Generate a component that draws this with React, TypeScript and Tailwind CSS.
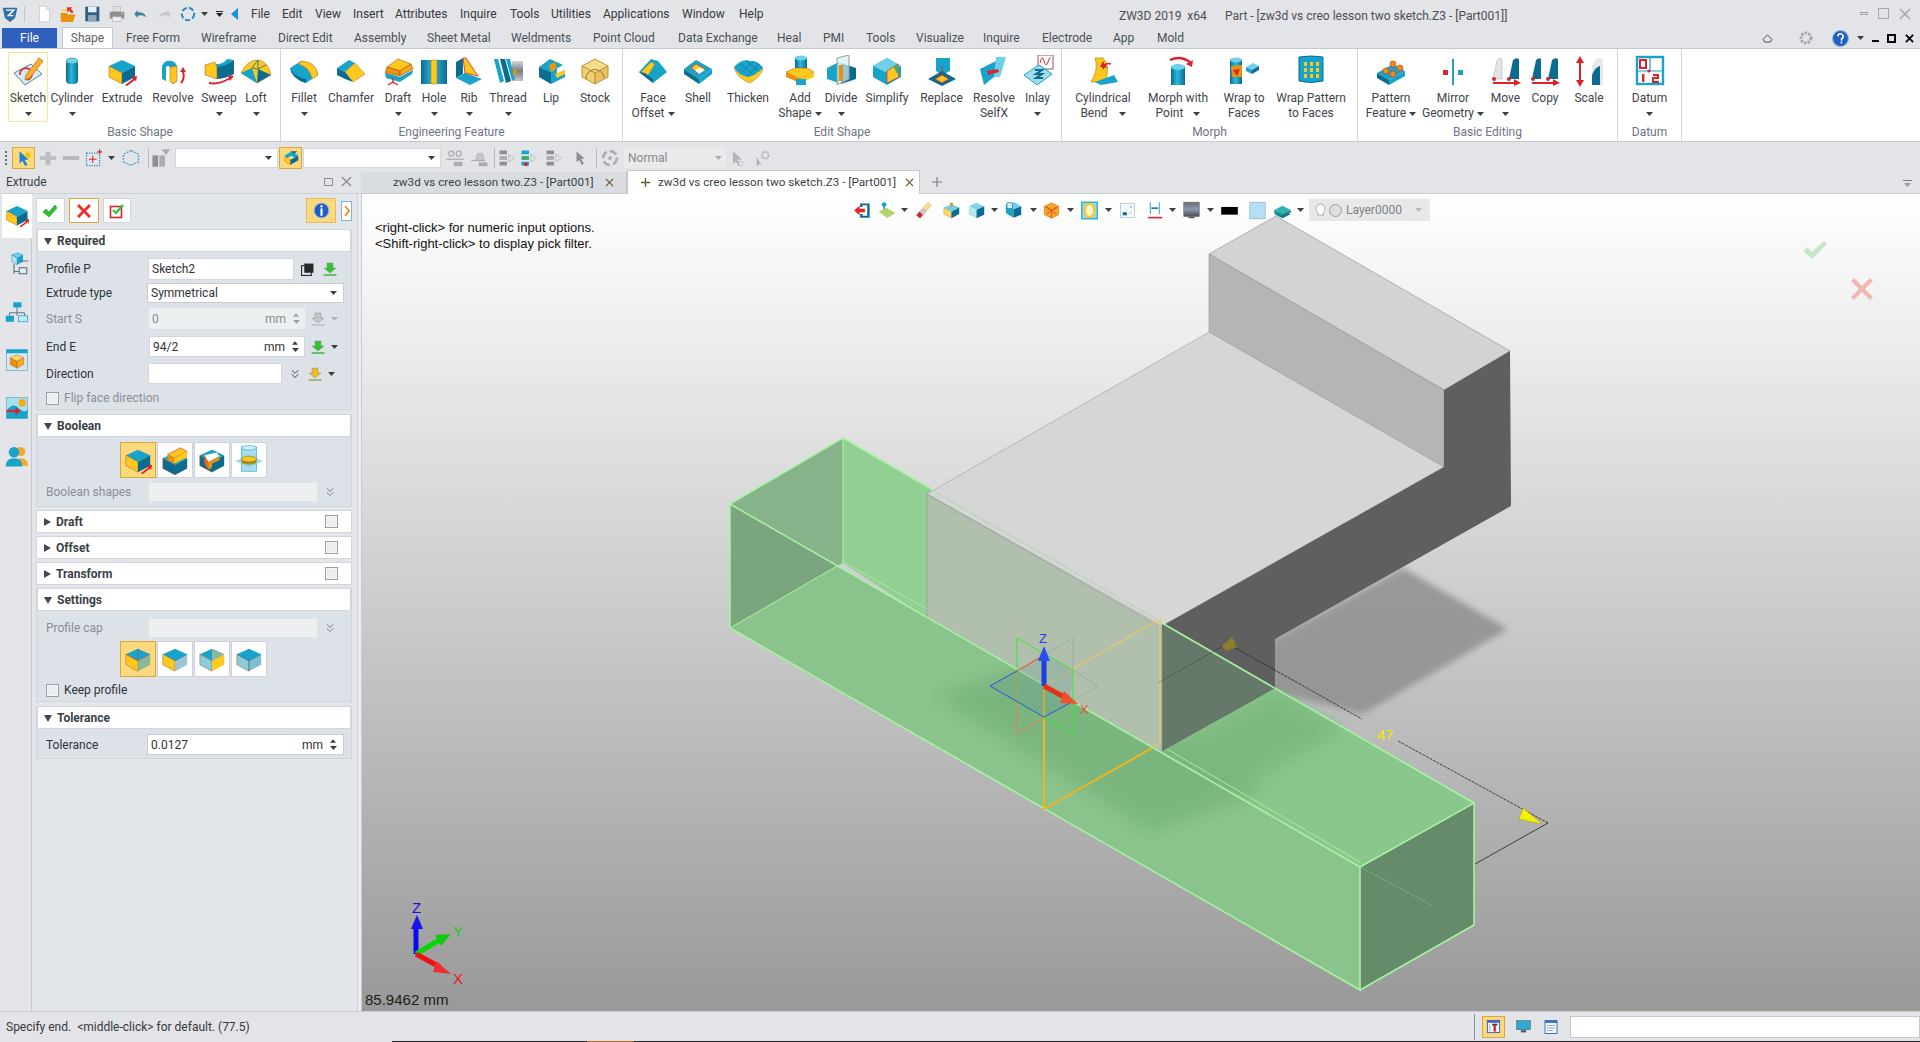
import type { ReactNode } from 'react';
import { ChevronsDown } from 'lucide-react';

const B = '#18a3cb';
const BD = '#0b6c90';
const BL = '#6fd0ea';
const Y = '#ffc81e';
const YD = '#e8920c';
const R = '#d8252b';
const G = '#a9adb1';
const GD = '#8c9094';

function Box({ top = B, left = Y, right = BD, t }: { top?: string; left?: string; right?: string; t?: string }) {
  return (
    <g transform={t}>
      <polygon points="16,5 29,11 16,18 3,11" fill={top} />
      <polygon points="3,11 16,18 16,29 3,22" fill={left} stroke="#a8501a" strokeWidth="0.5" />
      <polygon points="16,18 29,11 29,22 16,29" fill={right} />
    </g>
  );
}

const icons: Record<string, ReactNode> = {
  sketch: (
    <>
      <polygon points="2,17 19,8 30,18 13,29" fill="#d6e8f0" stroke="#4f8ca6" />
      <path d="M8 19a6 6 0 1 1 7 5" fill="none" stroke={R} strokeWidth="1.6" />
      <polygon points="14,19 27,2 31,5 18,22 13,24" fill="#ffb02a" stroke="#a8661a" strokeWidth="0.7" />
    </>
  ),
  cylinder: (
    <>
      <rect x="10" y="5" width="12" height="24" rx="4" fill="url(#cyl)" />
      <ellipse cx="16" cy="6" rx="6" ry="3" fill={BL} stroke={BD} strokeWidth="0.5" />
    </>
  ),
  extrude: (
    <>
      <Box />
      <path d="M19 30l8-6-2-2 6-1-1 6-1-2-8 6z" fill={R} />
    </>
  ),
  revolve: (
    <>
      <path d="M5 24V11a8 8 0 0 1 15 0v15l-4 3-3-3V13a2 2 0 0 0-4 0v13z" fill={B} />
      <polygon points="13,12 20,11 20,26 16,29 13,26" fill={Y} stroke="#a8501a" strokeWidth="0.5" />
      <path d="M24 28c3-3 3-8 2-12" fill="none" stroke={R} strokeWidth="2" />
      <polygon points="23,17 26,12 29,17" fill={R} />
    </>
  ),
  sweep: (
    <>
      <path d="M13 10Q20 12 31 5V19Q22 24 13 24z" fill={BD} />
      <path d="M12 9Q20 10 24 4L31 5Q22 12 14 12z" fill={B} />
      <polygon points="2,10 12,7 14,12 14,24 2,20" fill={Y} stroke="#a8501a" strokeWidth="0.5" />
      <path d="M6 28Q16 30 27 23" fill="none" stroke={R} strokeWidth="2" />
      <polygon points="25,20 31,21 27,26" fill={R} />
    </>
  ),
  loft: (
    <>
      <path d="M1 18Q7 5 18 5Q28 6 31 20L17 28z" fill={Y} stroke="#a8701a" strokeWidth="0.5" />
      <polygon points="1,18 12,13 17,28" fill={B} />
      <polygon points="18,14 31,20 17,28" fill={BD} />
      <path d="M12 13L18 5M18 14L12 13M18 14L18 5M18 14L26 10" stroke={BD} strokeWidth="0.8" fill="none" />
    </>
  ),
  fillet: (
    <>
      <path d="M2 13L13 6Q28 7 30 20L18 28Q4 24 2 13z" fill={B} />
      <path d="M10 9L14 6Q28 7 30 20L24 24Q22 12 10 9z" fill={Y} stroke="#a8701a" strokeWidth="0.5" />
      <path d="M2 13Q4 24 18 28V24Q6 22 2 13z" fill={BD} />
    </>
  ),
  chamfer: (
    <>
      <polygon points="2,13 14,5 20,8 10,17" fill={B} />
      <polygon points="10,17 20,8 30,19 18,27" fill={Y} stroke="#a8701a" strokeWidth="0.5" />
      <polygon points="2,13 10,17 18,27 10,24 2,20" fill={BD} />
    </>
  ),
  draft: (
    <>
      <polygon points="5,12 16,4 29,9 18,16" fill={Y} stroke="#a8501a" strokeWidth="0.6" />
      <polygon points="3,18 18,21 18,16 5,12" fill={YD} stroke="#a8501a" strokeWidth="0.6" />
      <polygon points="18,21 31,14 29,9 18,16" fill="#f4a81c" stroke="#a8501a" strokeWidth="0.6" />
      <polygon points="3,18 18,22 31,15 30,19 18,27 4,23" fill={B} />
      <path d="M11 23v5M11 27l-5 3M11 27l5 3" stroke={R} strokeWidth="1.4" fill="none" />
    </>
  ),
  hole: (
    <>
      <rect x="3" y="5" width="26" height="24" fill="url(#cyl)" />
      <rect x="13" y="5" width="6" height="24" fill={Y} stroke="#a8701a" strokeWidth="0.5" />
    </>
  ),
  rib: (
    <>
      <polygon points="3,7 10,3 10,19 3,23" fill={BD} />
      <polygon points="3,23 12,18 29,24 17,30" fill={B} />
      <polygon points="10,3 13,3 25,21 12,18" fill={Y} stroke={R} strokeWidth="0.8" />
    </>
  ),
  thread: (
    <>
      <rect x="20" y="6" width="11" height="20" fill="url(#steel)" />
      <polygon points="2,4 6,4 12,26 8,28" fill={B} />
      <polygon points="8,4 13,4 19,26 14,28" fill={BD} />
      <polygon points="14,4 18,4 23,24 20,26" fill={B} />
      <polygon points="21,13 26,17 21,21" fill={YD} />
    </>
  ),
  lip: (
    <>
      <polygon points="4,12 15,4 28,10 16,17" fill={B} />
      <polygon points="4,12 16,17 16,29 4,22" fill={BD} />
      <polygon points="16,17 22,13 22,19 30,15 30,22 16,29" fill={B} />
      <polygon points="14,10 20,7 22,13 16,17" fill="#e8960e" />
      <polygon points="20,19 30,15 30,19 22,23" fill={Y} />
    </>
  ),
  stock: (
    <>
      <polygon points="16,4 29,11 16,18 3,11" fill="#f7dc88" stroke="#b8943a" />
      <polygon points="3,11 16,18 16,29 3,22" fill="#f2cf70" stroke="#b8943a" />
      <polygon points="16,18 29,11 29,22 16,29" fill="#eac060" stroke="#b8943a" />
      <path d="M7 24a9 9 0 0 1 18-1" fill="none" stroke="#8e7a3a" />
    </>
  ),
  faceoffset: (
    <>
      <polygon points="2,17 14,4 21,6 30,17 16,28" fill={B} />
      <polygon points="4,17 14,7 18,9 10,22" fill={Y} stroke="#7f8a40" strokeWidth="0.5" />
      <polygon points="2,17 16,28 16,24 8,18" fill={BD} />
    </>
  ),
  shell: (
    <>
      <polygon points="2,14 14,5 30,14 17,24" fill={B} />
      <polygon points="9,13 14,9 23,14 17,19" fill={Y} stroke={R} strokeWidth="0.6" />
      <polygon points="13,15 17,13 23,15 17,19" fill="#fff" />
      <polygon points="2,14 17,24 17,29 2,19" fill={BD} />
      <polygon points="17,24 30,14 30,19 17,29" fill={B} />
    </>
  ),
  thicken: (
    <>
      <path d="M2 13Q10 4 18 7Q26 6 31 14Q28 22 18 28Q6 24 2 13z" fill={Y} stroke="#a8701a" strokeWidth="0.5" />
      <path d="M2 12Q10 3 18 6Q26 5 31 13Q24 20 16 22Q6 20 2 12z" fill={B} />
      <path d="M8 9l14 11M14 6l13 10M22 6L10 18M27 9L16 21" stroke={BD} strokeWidth="0.6" />
    </>
  ),
  addshape: (
    <>
      <rect x="11" y="2" width="12" height="14" fill="url(#cyl)" />
      <ellipse cx="17" cy="3" rx="6" ry="2.5" fill={BL} />
      <polygon points="2,17 11,13 23,13 30,17 16,24" fill={Y} stroke="#a8501a" strokeWidth="0.5" />
      <polygon points="2,17 16,24 16,28 2,22" fill={YD} />
      <polygon points="16,24 30,17 30,22 16,28" fill={Y} />
      <rect x="12" y="24" width="10" height="6" fill={B} />
    </>
  ),
  divide: (
    <>
      <polygon points="2,13 14,7 14,28 2,24" fill={B} />
      <polygon points="16,8 31,13 31,24 16,29" fill={BD} />
      <polygon points="12,3 24,0 24,24 12,30" fill="#d8eef4" fillOpacity="0.7" stroke="#90a0a6" />
      <polygon points="14,10 18,10 18,26 14,26" fill={YD} />
    </>
  ),
  simplify: (
    <>
      <polygon points="16,3 30,11 30,22 16,30 2,22 2,11" fill={B} />
      <polygon points="16,3 30,11 16,18 2,11" fill={BL} />
      <polygon points="16,16 27,9 28,22 16,28" fill={Y} stroke={R} strokeWidth="0.7" />
      <polygon points="22,11 27,9 28,22" fill="#58a862" />
    </>
  ),
  replace: (
    <>
      <polygon points="10,3 24,3 24,16 16,20 10,16" fill={B} />
      <polygon points="2,24 16,16 30,24 16,31" fill={BD} />
      <polygon points="9,24 16,20 23,24 16,28" fill={Y} stroke={R} strokeWidth="0.8" />
      <path d="M16 11v9" stroke={R} strokeWidth="0.8" />
    </>
  ),
  resolve: (
    <>
      <polygon points="2,14 22,4 16,22 6,30" fill={B} />
      <polygon points="18,2 28,2 22,22 16,22" fill={BL} />
      <polygon points="9,16 20,14 21,17 10,20" fill={R} />
    </>
  ),
  inlay: (
    <>
      <rect x="16" y="0" width="15" height="14" fill="#fff" stroke="#8b5a5a" />
      <path d="M18 8q2-9 4-2t4 1 3-4" fill="none" stroke={R} strokeWidth="1" />
      <polygon points="2,20 17,10 30,19 15,30" fill="#a5dcec" stroke={B} />
      <path d="M13 15h7l-6 4h6l-6 4h7" fill="none" stroke={BD} strokeWidth="2" />
    </>
  ),
  bend: (
    <>
      <path d="M8 3h8q8 8 2 24H4Q12 14 8 3z" fill={Y} stroke="#a8701a" strokeWidth="0.6" />
      <polygon points="8,27 27,20 31,27 14,30" fill={B} />
      <path d="M16 14q2-7 8-5" fill="none" stroke={R} strokeWidth="1.6" />
      <polygon points="13,12 20,13 16,6" fill={R} />
    </>
  ),
  morph: (
    <>
      <rect x="9" y="11" width="14" height="19" fill="url(#cyl)" />
      <ellipse cx="16" cy="12" rx="7" ry="3" fill={BL} />
      <path d="M8 5q10-5 20 2" fill="none" stroke={R} strokeWidth="2.4" />
      <polygon points="24,9 31,5 30,12" fill={R} />
    </>
  ),
  wrapto: (
    <>
      <rect x="2" y="4" width="12" height="25" fill="url(#cyl)" />
      <ellipse cx="8" cy="5" rx="6" ry="2.5" fill={BL} />
      <polygon points="3,11 14,10 14,22 4,22" fill={YD} />
      <polygon points="5,15 12,14 9,21" fill={R} />
      <polygon points="18,12 25,8 31,11 24,15" fill={BL} />
      <polygon points="18,12 24,15 24,19 18,16" fill={B} />
      <polygon points="24,15 31,11 31,15 24,19" fill={BD} />
    </>
  ),
  wrappat: (
    <>
      <path d="M4 2Q16 0 28 2V26Q16 29 4 26z" fill={B} stroke={BD} />
      <path d="M9 7h3v4H9zM15 7h3v4h-3zM21 7h3v4h-3zM9 13h3v4H9zM15 13h3v4h-3zM21 13h3v4h-3zM9 19h3v4H9zM15 19h3v4h-3zM21 19h3v4h-3z" fill={Y} />
    </>
  ),
  patfeat: (
    <>
      <polygon points="2,18 18,9 30,16 14,25" fill={B} />
      <polygon points="2,18 14,25 14,30 2,23" fill={BD} />
      <polygon points="14,25 30,16 30,21 14,30" fill={B} />
      <circle cx="11" cy="16" r="3" fill={YD} stroke={R} strokeWidth="0.6" />
      <circle cx="18" cy="9" r="3" fill={YD} stroke={R} strokeWidth="0.6" />
      <circle cx="18" cy="19" r="3" fill={YD} stroke={R} strokeWidth="0.6" />
      <circle cx="25" cy="13" r="3" fill={YD} stroke={R} strokeWidth="0.6" />
    </>
  ),
  mirror: (
    <>
      <path d="M16 4v26" stroke={B} strokeWidth="2" />
      <rect x="6" y="15" width="5" height="5" fill={R} />
      <rect x="21" y="15" width="5" height="5" fill={B} />
    </>
  ),
  move: (
    <>
      <path d="M3 24L7 5q3-3 5-1v20z" fill="#e2e4e6" stroke="#b0b4b8" strokeWidth="0.6" />
      <path d="M19 24L23 5q3-3 6-1v20z" fill={BD} />
      <path d="M3 28h22" stroke={R} strokeWidth="2" />
      <polygon points="24,24 31,28 24,31" fill={R} />
      <circle cx="4" cy="24" r="2" fill={R} />
      <circle cx="19" cy="24" r="2" fill={R} />
    </>
  ),
  copy: (
    <>
      <path d="M3 24L7 5q3-3 5-1v20z" fill={BD} />
      <path d="M19 24L23 5q3-3 6-1v20z" fill={BD} />
      <path d="M3 28h22" stroke={R} strokeWidth="2" />
      <polygon points="24,24 31,28 24,31" fill={R} />
      <circle cx="4" cy="24" r="2" fill={R} />
      <circle cx="19" cy="24" r="2" fill={R} />
    </>
  ),
  scale: (
    <>
      <path d="M7 6v22" stroke={R} strokeWidth="2" />
      <polygon points="3,8 7,1 11,8" fill={R} />
      <polygon points="3,25 7,32 11,25" fill={R} />
      <path d="M19 30V12q2-9 8-9q3 0 3 4v23z" fill="#e6e8ea" />
      <path d="M19 30V20q3-8 8-9v19z" fill={BD} />
    </>
  ),
  datum: (
    <>
      <rect x="3" y="2" width="26" height="27" fill="#fff" stroke={B} strokeWidth="2.4" />
      <path d="M16 3v13M4 16h24" stroke={B} strokeWidth="1.2" />
      <circle cx="15" cy="16" r="1.6" fill={R} />
      <rect x="6" y="5" width="6" height="8" fill="none" stroke={R} strokeWidth="2" />
      <rect x="8" y="19" width="2.4" height="8" fill={R} />
      <path d="M19 20h5v3h-5v4h6" fill="none" stroke={R} strokeWidth="2" />
    </>
  ),
  select: (
    <>
      <polygon points="8,4 8,26 13,21 18,30 22,28 17,19 24,19" fill="#1a82d4" />
      <circle cx="23" cy="11" r="5" fill="#f2c500" />
    </>
  ),
  plus: <path d="M12 6h8v7h9v6h-9v8h-8v-8H3v-6h9z" fill="#bcbfc2" />,
  minus: <rect x="3" y="13" width="26" height="6" fill="#b4b7ba" />,
  boxplus: (
    <>
      <rect x="4" y="8" width="21" height="20" fill="none" stroke="#1e8fb4" strokeWidth="2" strokeDasharray="2 2" />
      <path d="M14 12v12M8 18h12" stroke={R} strokeWidth="1.6" />
      <path d="M25 2v8M21 6h8" stroke={R} strokeWidth="2" />
    </>
  ),
  hex: <polygon points="16,4 28,10 28,22 16,28 4,22 4,10" fill="none" stroke="#3d9ec2" strokeWidth="2" strokeDasharray="3 2" />,
  filter: (
    <>
      <rect x="4" y="12" width="9" height="18" fill={GD} />
      <rect x="15" y="12" width="9" height="18" fill={G} />
      <polygon points="18,2 32,2 26,11" fill={G} />
    </>
  ),
  shapeSel: (
    <>
      <polygon points="4,12 16,5 29,11 24,16 16,12 10,16" fill={B} />
      <polygon points="5,14 15,19 15,28 5,22" fill={Y} stroke="#a8501a" strokeWidth="0.6" />
      <polygon points="15,19 29,12 29,20 15,28" fill={BD} />
      <polygon points="15,4 27,4 22,9" fill={BD} />
    </>
  ),
  gglass: (
    <>
      <circle cx="10" cy="9" r="4" fill="none" stroke={G} strokeWidth="2" />
      <circle cx="22" cy="9" r="4" fill="none" stroke={G} strokeWidth="2" />
      <path d="M2 18h28" stroke={G} strokeWidth="2" />
      <rect x="14" y="22" width="14" height="7" fill={G} />
    </>
  ),
  ghat: (
    <>
      <path d="M10 14a6 6 0 0 1 12 0v6H10z" fill="#c4c7ca" stroke={G} />
      <path d="M2 20h22" stroke={G} strokeWidth="2" />
      <rect x="14" y="23" width="14" height="6" fill={G} />
    </>
  ),
  gstack: (
    <>
      <rect x="4" y="4" width="12" height="6" fill={GD} />
      <rect x="4" y="13" width="12" height="6" fill={G} />
      <rect x="4" y="22" width="12" height="6" fill={GD} />
      <polygon points="19,10 28,16 19,22" fill="#e4e6e8" stroke={G} />
    </>
  ),
  cstack: (
    <>
      <rect x="4" y="4" width="12" height="6" fill={B} />
      <rect x="4" y="13" width="12" height="6" fill="#3aa86a" />
      <rect x="4" y="22" width="12" height="6" fill={B} />
      <circle cx="11" cy="26" r="3" fill={R} />
      <polygon points="19,10 28,16 19,22" fill="#e4e6e8" stroke={G} />
    </>
  ),
  gptr: <polygon points="9,3 9,24 14,20 20,30 24,27 18,18 25,17" fill={GD} />,
  gcycle: (
    <>
      <circle cx="16" cy="16" r="11" fill="none" stroke={G} strokeWidth="4" strokeDasharray="12 5" />
      <circle cx="16" cy="16" r="3" fill={G} />
    </>
  ),
  gptr2: (
    <>
      <polygon points="7,4 7,26 12,22 17,30 21,28 15,19 23,18" fill="#b0b4b8" />
      <circle cx="21" cy="26" r="4" fill="#e4e6e8" stroke={G} />
    </>
  ),
  ggear: (
    <>
      <polygon points="5,14 5,30 10,26 14,30" fill={G} />
      <circle cx="20" cy="11" r="6" fill="none" stroke={G} strokeWidth="3" strokeDasharray="3 1.5" />
    </>
  ),
  exit: (
    <>
      <path d="M12 4h16v24H12v-6h4v3h8V7h-8v3h-4z" fill={BD} />
      <path d="M2 16l9-8v5h9v6h-9v5z" fill="#ee1c25" />
    </>
  ),
  viewplane: (
    <>
      <polygon points="4,18 16,12 30,20 17,28" fill="#a6d96a" stroke="#e89a2a" strokeDasharray="2 1" />
      <path d="M12 14V6" stroke={BD} strokeWidth="2" />
      <circle cx="12" cy="6" r="4" fill={B} />
    </>
  ),
  brush: (
    <>
      <polygon points="4,24 14,12 21,17 11,29" fill="#c8c8cc" stroke="#8a8a8e" strokeWidth="0.5" />
      <polygon points="4,24 9,18 15,23 10,29" fill={R} />
      <polygon points="15,11 24,2 29,7 21,17" fill="#fbdc8c" stroke="#b08a3a" strokeWidth="0.5" />
    </>
  ),
  boxpin: (
    <>
      <Box left="#ffd860" right={BD} top={BL} />
      <polygon points="13,3 19,3 16,12" fill={YD} />
    </>
  ),
  shaded: (
    <>
      <polygon points="16,3 29,9 16,15 3,9" fill="#7fd4ea" />
      <polygon points="3,9 16,15 16,29 3,23" fill="#b8e4f0" />
      <polygon points="16,15 29,9 29,23 16,29" fill={BD} />
    </>
  ),
  cube4: (
    <>
      <polygon points="3,6 18,2 29,9 16,14" fill={BL} />
      <polygon points="3,6 16,14 16,28 3,20" fill={B} />
      <polygon points="16,14 29,9 29,23 16,28" fill={BD} />
      <rect x="5" y="3" width="9" height="10" fill="#d4eef6" stroke={BD} />
    </>
  ),
  wirecube: (
    <>
      <polygon points="16,3 28,9 28,23 16,29 4,23 4,9" fill="#f6a623" stroke="#d97a0a" />
      <path d="M4 9l12 7 12-7M16 16v13M8 22l16-12M24 22L8 10" stroke={R} strokeWidth="1" fill="none" />
    </>
  ),
  ring: (
    <>
      <rect x="3" y="2" width="26" height="28" fill="#9ed8ee" stroke={B} strokeWidth="2" />
      <ellipse cx="16" cy="16" rx="8" ry="11" fill="#fff6d0" stroke={Y} strokeWidth="3.5" />
    </>
  ),
  clip: (
    <>
      <rect x="4" y="4" width="24" height="24" fill="#f4f8fa" stroke="#9cb4c0" />
      <rect x="8" y="19" width="7" height="5" fill={BD} />
      <path d="M20 10h4M22 8v4M18 22l5-5" stroke="#7ab6ce" strokeWidth="1.2" />
    </>
  ),
  dim: (
    <>
      <path d="M9 2v20M24 2v20" stroke={B} strokeWidth="1.6" />
      <path d="M11 12h11" stroke={BD} strokeWidth="2.6" />
      <path d="M5 28h24" stroke={R} strokeWidth="2.6" />
    </>
  ),
  gradbg: (
    <>
      <rect x="3" y="2" width="26" height="24" fill="url(#bgrad)" stroke="#5d6066" />
      <rect x="11" y="26" width="10" height="3" fill="#55585c" />
    </>
  ),
  blacksw: <rect x="2" y="10" width="28" height="13" fill="#000" />,
  bluesw: <rect x="3" y="2" width="26" height="28" fill="#b4e0f6" stroke="#8ea4b0" />,
  layers: (
    <>
      <polygon points="2,22 16,17 30,22 16,29" fill={BD} />
      <polygon points="2,15 16,8 30,15 16,23" fill="#2fb4ac" />
      <polygon points="2,15 16,23 16,27 2,20" fill="#1c8f8a" />
      <polygon points="16,23 30,15 30,19 16,27" fill="#178079" />
    </>
  ),
  treeIcon: (
    <>
      <polygon points="9,4 17,1 24,4 16,8" fill={BL} stroke={BD} strokeWidth="0.5" />
      <polygon points="9,4 16,8 16,17 9,13" fill="#b6e2ef" stroke={BD} strokeWidth="0.5" />
      <polygon points="16,8 24,4 24,13 16,17" fill={B} />
      <path d="M12 16v13M12 26h7M20 12h11" stroke="#607482" strokeWidth="1.5" fill="none" />
      <rect x="19" y="21" width="10" height="8" fill="#e2eef4" stroke="#607482" strokeWidth="1.5" />
    </>
  ),
  hier: (
    <>
      <rect x="11" y="3" width="11" height="7" fill={B} />
      <path d="M16 10v7M6 17h20M6 17v4M26 17v4M16 17v4" stroke="#607482" strokeWidth="1.4" fill="none" />
      <rect x="1" y="21" width="11" height="8" fill={B} />
      <rect x="18" y="21" width="12" height="8" fill="#c6e8f4" stroke={B} />
    </>
  ),
  partwin: (
    <>
      <rect x="2" y="2" width="28" height="28" fill="#d4e8f0" stroke="#7aa6bc" />
      <rect x="2" y="2" width="28" height="5" fill={B} />
      <polygon points="16,9 25,13 16,18 7,13" fill="#ffd860" stroke="#a8501a" strokeWidth="0.5" />
      <polygon points="7,13 16,18 16,27 7,22" fill={YD} stroke="#a8501a" strokeWidth="0.5" />
      <polygon points="16,18 25,13 25,22 16,27" fill="#f4a81c" stroke="#a8501a" strokeWidth="0.5" />
    </>
  ),
  scene: (
    <>
      <rect x="2" y="2" width="28" height="28" fill="#a8e0f0" stroke="#7aa6bc" />
      <circle cx="23" cy="9" r="5" fill="#f4a81c" />
      <path d="M2 20Q10 8 18 16T30 18V30H2z" fill={B} />
      <path d="M2 20h14" stroke={R} strokeWidth="3" />
      <polygon points="14,15 21,20 14,25" fill={R} />
    </>
  ),
  users: (
    <>
      <circle cx="21" cy="10" r="6" fill="#f2a828" />
      <path d="M12 29q0-10 9-10t10 10z" fill="#f2a828" />
      <circle cx="12" cy="11" r="7" fill={B} />
      <path d="M1 30q0-11 11-11t11 11z" fill={B} />
    </>
  ),
  booleanAdd: (
    <>
      <Box />
      <path d="M19 30l8-6-2-2 6-1-1 6-1-2-8 6z" fill={R} />
    </>
  ),
  booleanSub: (
    <>
      <Box top={B} left={BD} right={BD} t="translate(0 3)" />
      <polygon points="8,10 22,3 29,7 15,14" fill={Y} stroke={R} strokeWidth="0.6" />
      <polygon points="8,10 15,14 15,20 8,16" fill={YD} />
      <polygon points="15,14 29,7 29,13 15,20" fill={Y} />
    </>
  ),
  booleanCut: (
    <>
      <Box top={B} left={BD} right={BD} />
      <polygon points="8,11 21,8 24,12 12,18" fill="#fff" />
      <polygon points="8,11 12,18 12,26 8,20" fill="#e86a18" />
      <polygon points="12,18 24,12 24,16 16,20 16,24 12,26" fill={YD} />
    </>
  ),
  booleanInt: (
    <>
      <rect x="8" y="2" width="16" height="26" fill="#a6dcec" stroke={B} strokeWidth="0.6" />
      <ellipse cx="16" cy="3" rx="8" ry="2.4" fill="#d4eef6" stroke={B} strokeWidth="0.6" />
      <polygon points="1,17 16,10 31,17 16,24" fill="#88cfe0" fillOpacity="0.75" />
      <path d="M8 15v3a8 3 0 0 0 16 0v-3" fill="#a8901e" />
      <ellipse cx="16" cy="15" rx="8" ry="3" fill={Y} stroke="#7a6a20" strokeWidth="0.5" />
    </>
  ),
  cap1: (
    <>
      <Box top={B} left={Y} right="#8ab89c" />
      <path d="M16 5v13M3 11l13 7 13-7" stroke="#c84a2a" strokeWidth="0.6" fill="none" />
    </>
  ),
  cap2: (
    <>
      <Box top={B} left={Y} right="#9cc6d4" />
      <path d="M16 18l13-7" stroke={BD} strokeWidth="0.6" />
    </>
  ),
  cap3: (
    <>
      <Box top={B} left="#8ccbdc" right={Y} />
      <polygon points="16,5 29,11 16,18" fill="#8ab89c" />
    </>
  ),
  cap4: (
    <>
      <Box top={B} left="#8ccbdc" right="#7cc0d2" />
      <path d="M16 18v11M3 11l13 7 13-7" stroke={BD} strokeWidth="0.6" fill="none" />
    </>
  ),
  news: (
    <>
      <path d="M8 2h12l6 6v22H8z" fill="#fff" stroke="#b6b8ba" />
      <path d="M20 2v6h6" fill="#e8e8e8" stroke="#b6b8ba" />
    </>
  ),
  open: (
    <>
      <path d="M3 14h10l3 3h13l-4 13H3z" fill={YD} />
      <path d="M6 12V8h8l3 3" fill="#ffd24a" />
      <path d="M14 4h10l-3 3 5 5-3 3-5-5-3 3z" fill="#e4321c" />
    </>
  ),
  save: (
    <>
      <rect x="4" y="3" width="25" height="26" fill="#2d5e86" />
      <rect x="9" y="3" width="15" height="10" fill="#e8eef2" />
      <rect x="9" y="18" width="15" height="11" fill="#8fa6b6" />
    </>
  ),
  print: (
    <>
      <rect x="10" y="3" width="12" height="9" fill="#dfe1e3" stroke={G} />
      <rect x="3" y="12" width="26" height="12" fill={GD} />
      <rect x="8" y="21" width="16" height="8" fill="#eceeef" stroke={G} />
      <circle cx="25" cy="15" r="1.5" fill="#f4c430" />
    </>
  ),
  undo: <path d="M4 16l6-7v4q12-1 16 9-6-5-16-3v4z" fill="#3d7ea6" />,
  redo: <path d="M28 16l-6-7v4Q10 12 6 22q6-5 16-3v4z" fill="#c6c9cc" />,
  cycleq: <circle cx="16" cy="16" r="11" fill="none" stroke="#2c8cb8" strokeWidth="3.6" strokeDasharray="9 4" />,
  logo: (
    <>
      <path d="M3 5h26l-4 18-9 7-9-7z" fill="#2d6fa8" />
      <path d="M9 9h14l-10 10h9" fill="none" stroke="#fff" strokeWidth="2.4" />
    </>
  ),
  monitor: (
    <>
      <rect x="3" y="5" width="26" height="17" fill="#2ea8d4" stroke="#4a5860" />
      <rect x="11" y="23" width="10" height="4" fill="#4a5860" />
    </>
  ),
  list: (
    <>
      <rect x="4" y="3" width="24" height="26" fill="#f2f6fb" stroke="#3a74c4" strokeWidth="2" />
      <rect x="4" y="3" width="24" height="5" fill="#3a74c4" />
      <path d="M8 13h16M8 18h16M8 23h12" stroke="#7a8a9a" strokeWidth="1.4" />
    </>
  ),
  tools: (
    <>
      <rect x="3" y="3" width="26" height="26" fill="#f4f6fb" stroke="#3a62c0" strokeWidth="2" />
      <rect x="3" y="3" width="26" height="5" fill="#3a62c0" />
      <path d="M8 12v14" stroke="#3a62c0" strokeWidth="2" strokeDasharray="2 2" />
      <rect x="16" y="13" width="5" height="14" fill={R} />
      <rect x="13" y="10" width="11" height="4" fill="#444" />
    </>
  ),
};

function Icon({ n, size = 'w-[32px] h-[32px]' }: { n: string; size?: string }) {
  return (
    <svg viewBox="0 0 32 32" className={`${size} shrink-0`}>
      {icons[n]}
    </svg>
  );
}

function Caret({ color = '#3c3f42' }: { color?: string }) {
  return (
    <svg viewBox="0 0 7 4" className="w-[7px] h-[4px] shrink-0">
      <path d="M0 0h7L3.5 4z" fill={color} />
    </svg>
  );
}

type RibbonItem = { icon: string; w: string; a: string; b?: string; caret?: boolean; cm?: string };
type RibbonGroup = { label: string; w: string; pl: string; items: RibbonItem[] };

const ribbon: RibbonGroup[] = [
  {
    label: 'Basic Shape',
    w: 'w-[281px]',
    pl: 'pl-[8px]',
    items: [
      { icon: 'sketch', w: 'w-[40px]', a: 'Sketch', caret: true },
      { icon: 'cylinder', w: 'w-[48px]', a: 'Cylinder', caret: true },
      { icon: 'extrude', w: 'w-[52px]', a: 'Extrude' },
      { icon: 'revolve', w: 'w-[50px]', a: 'Revolve' },
      { icon: 'sweep', w: 'w-[42px]', a: 'Sweep', caret: true },
      { icon: 'loft', w: 'w-[32px]', a: 'Loft', caret: true },
    ],
  },
  {
    label: 'Engineering Feature',
    w: 'w-[342px]',
    pl: 'pl-[0px]',
    items: [
      { icon: 'fillet', w: 'w-[46px]', a: 'Fillet', caret: true },
      { icon: 'chamfer', w: 'w-[48px]', a: 'Chamfer' },
      { icon: 'draft', w: 'w-[46px]', a: 'Draft', caret: true },
      { icon: 'hole', w: 'w-[26px]', a: 'Hole', caret: true },
      { icon: 'rib', w: 'w-[44px]', a: 'Rib', caret: true },
      { icon: 'thread', w: 'w-[34px]', a: 'Thread', caret: true },
      { icon: 'lip', w: 'w-[52px]', a: 'Lip' },
      { icon: 'stock', w: 'w-[36px]', a: 'Stock' },
    ],
  },
  {
    label: 'Edit Shape',
    w: 'w-[439px]',
    pl: 'pl-[0px]',
    items: [
      { icon: 'faceoffset', w: 'w-[60px]', a: 'Face', b: 'Offset', caret: true, cm: 'ml-[3px]' },
      { icon: 'shell', w: 'w-[30px]', a: 'Shell' },
      { icon: 'thicken', w: 'w-[70px]', a: 'Thicken' },
      { icon: 'addshape', w: 'w-[34px]', a: 'Add', b: 'Shape', caret: true, cm: 'ml-[3px]' },
      { icon: 'divide', w: 'w-[48px]', a: 'Divide', caret: true },
      { icon: 'simplify', w: 'w-[44px]', a: 'Simplify' },
      { icon: 'replace', w: 'w-[65px]', a: 'Replace' },
      { icon: 'resolve', w: 'w-[40px]', a: 'Resolve', b: 'SelfX' },
      { icon: 'inlay', w: 'w-[47px]', a: 'Inlay', caret: true },
    ],
  },
  {
    label: 'Morph',
    w: 'w-[296px]',
    pl: 'pl-[0px]',
    items: [
      { icon: 'bend', w: 'w-[82px]', a: 'Cylindrical', b: 'Bend', caret: true, cm: 'ml-[11px]' },
      { icon: 'morph', w: 'w-[68px]', a: 'Morph with', b: 'Point', caret: true, cm: 'ml-[10px]' },
      { icon: 'wrapto', w: 'w-[64px]', a: 'Wrap to', b: 'Faces' },
      { icon: 'wrappat', w: 'w-[70px]', a: 'Wrap Pattern', b: 'to Faces' },
    ],
  },
  {
    label: 'Basic Editing',
    w: 'w-[260px]',
    pl: 'pl-[0px]',
    items: [
      { icon: 'patfeat', w: 'w-[66px]', a: 'Pattern', b: 'Feature', caret: true, cm: 'ml-[3px]' },
      { icon: 'mirror', w: 'w-[58px]', a: 'Mirror', b: 'Geometry', caret: true, cm: 'ml-[3px]' },
      { icon: 'move', w: 'w-[47px]', a: 'Move', caret: true },
      { icon: 'copy', w: 'w-[32px]', a: 'Copy' },
      { icon: 'scale', w: 'w-[56px]', a: 'Scale' },
    ],
  },
  {
    label: 'Datum',
    w: 'w-[64px]',
    pl: 'pl-[0px]',
    items: [{ icon: 'datum', w: 'w-[63px]', a: 'Datum', caret: true }],
  },
];

const menus = [
  ['File', 'w-[31px]'],
  ['Edit', 'w-[33px]'],
  ['View', 'w-[38px]'],
  ['Insert', 'w-[42px]'],
  ['Attributes', 'w-[65px]'],
  ['Inquire', 'w-[50px]'],
  ['Tools', 'w-[41px]'],
  ['Utilities', 'w-[52px]'],
  ['Applications', 'w-[79px]'],
  ['Window', 'w-[57px]'],
  ['Help', 'w-[40px]'],
];

const tabs = [
  ['Free Form', 'w-[75px]'],
  ['Wireframe', 'w-[77px]'],
  ['Direct Edit', 'w-[76px]'],
  ['Assembly', 'w-[73px]'],
  ['Sheet Metal', 'w-[84px]'],
  ['Weldments', 'w-[82px]'],
  ['Point Cloud', 'w-[85px]'],
  ['Data Exchange', 'w-[99px]'],
  ['Heal', 'w-[46px]'],
  ['PMI', 'w-[43px]'],
  ['Tools', 'w-[50px]'],
  ['Visualize', 'w-[67px]'],
  ['Inquire', 'w-[59px]'],
  ['Electrode', 'w-[71px]'],
  ['App', 'w-[44px]'],
  ['Mold', 'w-[40px]'],
];

const quick = [
  ['news', 'w-[24px]'],
  ['open', 'w-[24px]'],
  ['save', 'w-[24px]'],
  ['print', 'w-[25px]'],
  ['undo', 'w-[23px]'],
  ['redo', 'w-[24px]'],
  ['cycleq', 'w-[23px]'],
];

const viewBar: [string, string][] = [
  ['exit', 'w-[24px]'],
  ['viewplane', 'w-[25px]'],
  ['^', 'w-[10px]'],
  ['brush', 'w-[29px]'],
  ['boxpin', 'w-[26px]'],
  ['shaded', 'w-[25px]'],
  ['^', 'w-[10px]'],
  ['cube4', 'w-[29px]'],
  ['^', 'w-[10px]'],
  ['wirecube', 'w-[27px]'],
  ['^', 'w-[10px]'],
  ['ring', 'w-[28px]'],
  ['^', 'w-[10px]'],
  ['clip', 'w-[29px]'],
  ['dim', 'w-[25px]'],
  ['^', 'w-[10px]'],
  ['gradbg', 'w-[28px]'],
  ['^', 'w-[10px]'],
  ['blacksw', 'w-[29px]'],
  ['bluesw', 'w-[26px]'],
  ['layers', 'w-[25px]'],
  ['^', 'w-[10px]'],
];

function RibbonBar() {
  return (
    <div className="h-[94px] bg-white border-y border-[#c3c9d1] flex shrink-0">
      {ribbon.map((g) => (
        <div key={g.label} className={`${g.w} h-full border-r border-[#d2d6dc] flex flex-col shrink-0`}>
          <div className={`h-[75px] pt-[3px] flex ${g.pl}`}>
            {g.items.map((it) => (
              <div
                key={it.a}
                className={`${it.w} h-[70px] flex flex-col items-center shrink-0 ${it.icon === 'sketch' ? 'border border-[#f4e7a6] bg-[#fffef8]' : ''}`}
              >
                <div className="pt-[3px] h-[39px]">
                  <Icon n={it.icon} />
                </div>
                <div className="h-[15px] leading-[15px] text-[12px] text-[#3f444a] whitespace-nowrap">{it.a}</div>
                <div className="h-[15px] leading-[15px] text-[12px] text-[#3f444a] whitespace-nowrap flex items-center justify-center">
                  {it.b}
                  {it.caret && (
                    <span className={it.cm}>
                      <Caret />
                    </span>
                  )}
                </div>
              </div>
            ))}
          </div>
          <div className="h-[16px] leading-[16px] text-center text-[12px] text-[#6d7488]">{g.label}</div>
        </div>
      ))}
    </div>
  );
}

function Slot({ n, w, s = 'w-[20px] h-[20px]' }: { n: string; w: string; s?: string }) {
  return (
    <div className={`${w} flex items-center justify-center shrink-0`}>
      {n === '^' ? <Caret /> : <Icon n={n} size={s} />}
    </div>
  );
}

function Sep({ w }: { w: string }) {
  return (
    <div className={`${w} h-[20px] flex justify-center shrink-0`}>
      <div className="w-px h-full bg-[#b9bdc2]" />
    </div>
  );
}

function Combo({ w }: { w: string }) {
  return (
    <div className={`${w} h-[20px] bg-white border border-[#d4d7db] flex items-center justify-end pr-[5px] shrink-0`}>
      <Caret />
    </div>
  );
}

function Toolbar() {
  return (
    <div className="h-[28px] bg-[#e2e4e7] flex items-center pt-[4px] shrink-0">
      <div className="w-[12px] flex flex-col items-center gap-[2px] shrink-0">
        <div className="w-[2px] h-[2px] bg-[#6a6e72]" />
        <div className="w-[2px] h-[2px] bg-[#6a6e72]" />
        <div className="w-[2px] h-[2px] bg-[#6a6e72]" />
        <div className="w-[2px] h-[2px] bg-[#6a6e72]" />
      </div>
      <div className="w-[23px] h-[22px] bg-[#fdd97d] border border-[#d9a93a] flex items-center justify-center shrink-0">
        <Icon n="select" size="w-[18px] h-[18px]" />
      </div>
      <Slot n="plus" w="w-[25px]" />
      <Slot n="minus" w="w-[22px]" />
      <Slot n="boxplus" w="w-[24px]" />
      <Slot n="^" w="w-[10px]" />
      <Slot n="hex" w="w-[30px]" />
      <Sep w="w-[4px]" />
      <Slot n="filter" w="w-[20px]" />
      <div className="w-[5px] shrink-0" />
      <Combo w="w-[103px]" />
      <div className="ml-px w-[23px] h-[22px] bg-[#fdd97d] border border-[#d9a93a] flex items-center justify-center shrink-0">
        <Icon n="shapeSel" size="w-[18px] h-[18px]" />
      </div>
      <div className="w-px shrink-0" />
      <Combo w="w-[138px]" />
      <Slot n="gglass" w="w-[27px]" />
      <Slot n="ghat" w="w-[24px]" />
      <Sep w="w-[4px]" />
      <Slot n="gstack" w="w-[21px]" />
      <Slot n="cstack" w="w-[24px]" />
      <Slot n="gstack" w="w-[25px]" />
      <Slot n="gptr" w="w-[28px]" s="w-[16px] h-[16px]" />
      <Sep w="w-[4px]" />
      <Slot n="gcycle" w="w-[24px]" />
      <div className="ml-[2px] w-[102px] h-[20px] bg-[#e9eaeb] flex items-center justify-between px-[4px] text-[12px] text-[#85888c] shrink-0">
        Normal
        <Caret color="#aeb1b4" />
      </div>
      <Slot n="gptr2" w="w-[24px]" s="w-[18px] h-[18px]" />
      <Slot n="ggear" w="w-[26px]" s="w-[18px] h-[18px]" />
    </div>
  );
}

function GetIcon({ color = '#33c233', base = '#28a028' }: { color?: string; base?: string }) {
  return (
    <svg viewBox="0 0 14 14" className="w-[14px] h-[14px] shrink-0">
      <path d="M4 1h6v5h3L7 11 1 6h3z" fill={color} stroke="#6a8a6a" strokeWidth="0.4" />
      <path d="M0.5 13h13" stroke={base} strokeWidth="1.2" />
    </svg>
  );
}

function Spin({ color = '#3c3f42' }: { color?: string }) {
  return (
    <div className="flex flex-col gap-[3px] shrink-0">
      <svg viewBox="0 0 7 4" className="w-[6px] h-[4px]">
        <path d="M0 4h7L3.5 0z" fill={color} />
      </svg>
      <Caret color={color} />
    </div>
  );
}

function Tri({ open }: { open: boolean }) {
  return (
    <svg viewBox="0 0 8 8" className="w-[8px] h-[8px] shrink-0">
      <path d={open ? 'M0 1h8L4 8z' : 'M1 0l7 4-7 4z'} fill="#44484d" />
    </svg>
  );
}

function Check() {
  return <div className="w-[13px] h-[13px] border border-[#9a9da1] bg-[#eceef1] outline outline-[#f5f6f8] -outline-offset-2 shrink-0" />;
}

function Head({ title, open = true, check = false, h = 'h-[23px]' }: { title: string; open?: boolean; check?: boolean; h?: string }) {
  return (
    <div className={`${h} bg-white border border-[#d2d6dc] flex items-center pl-[6px] pr-[13px] shrink-0`}>
      <Tri open={open} />
      <span className="ml-[5px] text-[12px] font-bold text-[#3a3f45] flex-1">{title}</span>
      {check && <Check />}
    </div>
  );
}

function IconBtns({ names }: { names: string[] }) {
  return (
    <div className="flex pl-[83px] gap-px">
      {names.map((n, i) => (
        <div
          key={n}
          className={`w-[36px] h-[36px] flex items-center justify-center border ${i === 0 ? 'bg-[#fdd97d] border-[#d9a93a]' : 'bg-white border-[#ccd2da]'}`}
        >
          <Icon n={n} size="w-[30px] h-[30px]" />
        </div>
      ))}
    </div>
  );
}

function ShapesRow({ label, mt }: { label: string; mt: string }) {
  return (
    <div className={`flex items-center h-[18px] pl-[9px] ${mt}`}>
      <span className="w-[103px] text-[12px] text-[#8a8d91]">{label}</span>
      <div className="w-[168px] h-[18px] bg-[#eeeff1]" />
      <div className="w-[26px] flex justify-center">
        <ChevronsDown size={14} strokeWidth={1.3} className="text-[#5e6267]" />
      </div>
    </div>
  );
}

function ToolPanel() {
  return (
    <div className="flex-1 min-h-0 flex bg-[#e2e5ea] border-t border-[#cfd3d9]">
      <div className="w-[32px] shrink-0 bg-[#e3e5e8] border-r border-[#c4c9d0] flex flex-col pl-[2px]">
        <div className="h-[44px] mb-[2px] pb-[3px] bg-white -mr-px flex items-center justify-center">
          <Icon n="extrude" size="w-[26px] h-[26px]" />
        </div>
        <div className="h-[48px] flex items-center justify-center">
          <Icon n="treeIcon" size="w-[24px] h-[24px]" />
        </div>
        <div className="h-[48px] flex items-center justify-center">
          <Icon n="hier" size="w-[24px] h-[24px]" />
        </div>
        <div className="h-[48px] flex items-center justify-center">
          <Icon n="partwin" size="w-[24px] h-[24px]" />
        </div>
        <div className="h-[48px] flex items-center justify-center">
          <Icon n="scene" size="w-[24px] h-[24px]" />
        </div>
        <div className="h-[48px] flex items-center justify-center">
          <Icon n="users" size="w-[24px] h-[24px]" />
        </div>
      </div>
      <div className="w-[325px] shrink-0 pl-[4px] pr-[5px] flex flex-col text-[12px] text-[#2e3338]">
        <div className="h-[25px] mt-[4px] flex items-center gap-[4px] shrink-0">
          <div className="w-[29px] h-[25px] bg-white border border-[#d2d6dc] flex items-center justify-center">
            <svg viewBox="0 0 16 16" className="w-[16px] h-[16px]">
              <path d="M1 9l3-3 3 3 6-7 2 3-8 9z" fill="#2cc02c" stroke="#1a8a1a" strokeWidth="0.5" />
            </svg>
          </div>
          <div className="w-[30px] h-[25px] bg-white border border-[#dca93c] flex items-center justify-center">
            <svg viewBox="0 0 18 18" className="w-[18px] h-[18px]">
              <path d="M2 4l2-2 5 5 5-5 2 2-5 5 5 5-2 2-5-5-5 5-2-2 5-5z" fill="#ee2e2e" />
            </svg>
          </div>
          <div className="w-[29px] h-[25px] bg-white border border-[#d2d6dc] flex items-center justify-center">
            <svg viewBox="0 0 16 16" className="w-[16px] h-[16px]">
              <rect x="1.5" y="3.5" width="11" height="11" fill="none" stroke="#d8252b" strokeWidth="1.6" />
              <path d="M4 7l3 3 7-8" fill="none" stroke="#2cc02c" strokeWidth="2.2" />
            </svg>
          </div>
          <div className="ml-[171px] w-[30px] h-[25px] bg-[#fdd97d] border border-[#e2bc60] flex items-center justify-center">
            <svg viewBox="0 0 16 16" className="w-[17px] h-[17px]">
              <circle cx="8" cy="8" r="7" fill="#1f5fc4" stroke="#a8bce0" />
              <rect x="7" y="3" width="2" height="2" fill="#fff" />
              <rect x="7" y="6" width="2" height="7" fill="#fff" />
            </svg>
          </div>
          <div className="w-[11px] h-[20px] ml-px bg-white border border-[#7ab6ce] flex items-center justify-center">
            <svg viewBox="0 0 6 10" className="w-[6px] h-[10px]">
              <path d="M1 0l4 5-4 5" fill="none" stroke="#f08a1c" strokeWidth="1.8" />
            </svg>
          </div>
        </div>

        <div className="mt-[6px] bg-[#dde2e9] border-x border-b border-[#d2d6dc] h-[181px] shrink-0">
          <Head title="Required" />
          <div className="flex items-center h-[22px] mt-[6px] pl-[9px]">
            <span className="w-[102px]">Profile P</span>
            <div className="w-[146px] h-[22px] bg-white border border-[#d2d6dc] pl-[3px] leading-[20px]">Sketch2</div>
            <svg viewBox="0 0 12 12" className="w-[13px] h-[13px] ml-[7px]">
              <rect x="0.5" y="2.5" width="9" height="9" fill="none" stroke="#26292c" />
              <rect x="3" y="0.5" width="8.5" height="8.5" fill="#26292c" />
            </svg>
            <div className="ml-[9px]">
              <GetIcon />
            </div>
          </div>
          <div className="flex items-center h-[20px] mt-[3px] pl-[9px]">
            <span className="w-[101px]">Extrude type</span>
            <div className="w-[197px] h-[20px] bg-white border border-[#c8ccd2] pl-[3px] pr-[6px] flex items-center justify-between">
              Symmetrical
              <Caret />
            </div>
          </div>
          <div className="flex items-center h-[21px] mt-[5px] pl-[9px] text-[#8a8d91]">
            <span className="w-[103px]">Start S</span>
            <div className="w-[156px] h-[21px] bg-[#eeeff1] pl-[3px] pr-[5px] flex items-center justify-between">
              <span>0</span>
              <span className="flex items-center gap-[7px]">
                mm
                <Spin color="#9ea1a5" />
              </span>
            </div>
            <div className="ml-[6px]">
              <GetIcon color="#c3c6c9" base="#b0b3b6" />
            </div>
            <div className="ml-[6px]">
              <Caret color="#b0b3b6" />
            </div>
          </div>
          <div className="flex items-center h-[21px] mt-[7px] pl-[9px]">
            <span className="w-[103px]">End E</span>
            <div className="w-[156px] h-[21px] bg-white border border-[#d2d6dc] pl-[3px] pr-[5px] flex items-center justify-between">
              <span>94/2</span>
              <span className="flex items-center gap-[7px]">
                mm
                <Spin />
              </span>
            </div>
            <div className="ml-[6px]">
              <GetIcon />
            </div>
            <div className="ml-[6px]">
              <Caret />
            </div>
          </div>
          <div className="flex items-center h-[21px] mt-[6px] pl-[9px]">
            <span className="w-[102px]">Direction</span>
            <div className="w-[134px] h-[21px] bg-white border border-[#d2d6dc]" />
            <div className="w-[26px] flex justify-center">
              <ChevronsDown size={14} strokeWidth={1.5} className="text-[#2e3338]" />
            </div>
            <GetIcon color="#f2b822" base="#8a9a30" />
            <div className="ml-[6px]">
              <Caret />
            </div>
          </div>
          <div className="flex items-center h-[18px] mt-[5px] pl-[9px] text-[#8a8d91]">
            <Check />
            <span className="ml-[5px]">Flip face direction</span>
          </div>
        </div>

        <div className="mt-[4px] bg-[#dde2e9] border-x border-b border-[#d2d6dc] h-[93px] shrink-0">
          <Head title="Boolean" />
          <div className="mt-[5px]">
            <IconBtns names={['booleanAdd', 'booleanSub', 'booleanCut', 'booleanInt']} />
          </div>
          <ShapesRow label="Boolean shapes" mt="mt-[5px]" />
        </div>

        <div className="mt-[3px]">
          <Head title="Draft" open={false} check />
        </div>
        <div className="mt-[3px]">
          <Head title="Offset" open={false} check />
        </div>
        <div className="mt-[3px]">
          <Head title="Transform" open={false} check />
        </div>

        <div className="mt-[3px] bg-[#dde2e9] border-x border-b border-[#d2d6dc] h-[114px] shrink-0">
          <Head title="Settings" />
          <ShapesRow label="Profile cap" mt="mt-[8px]" />
          <div className="mt-[4px]">
            <IconBtns names={['cap1', 'cap2', 'cap3', 'cap4']} />
          </div>
          <div className="flex items-center h-[18px] mt-[4px] pl-[9px]">
            <Check />
            <span className="ml-[5px]">Keep profile</span>
          </div>
        </div>

        <div className="mt-[4px] bg-[#dde2e9] border-x border-b border-[#d2d6dc] h-[53px] shrink-0">
          <Head title="Tolerance" />
          <div className="flex items-center h-[21px] mt-[5px] pl-[9px]">
            <span className="w-[101px]">Tolerance</span>
            <div className="w-[197px] h-[21px] bg-white border border-[#c8ccd2] pl-[3px] pr-[6px] flex items-center justify-between">
              <span>0.0127</span>
              <span className="flex items-center gap-[7px]">
                mm
                <Spin />
              </span>
            </div>
          </div>
        </div>
      </div>
      <div className="w-[4px] shrink-0 bg-[#eaedf1] border-l border-[#cfd3d9]" />
    </div>
  );
}

function Scene() {
  return (
    <svg viewBox="362 193 1558 817" className="absolute inset-0 w-full h-full">
      <defs>
        <filter id="soft" x="-20%" y="-20%" width="140%" height="140%">
          <feGaussianBlur stdDeviation="3" />
        </filter>
        <filter id="soft2" x="-20%" y="-20%" width="140%" height="140%">
          <feGaussianBlur stdDeviation="9" />
        </filter>
      </defs>
      {/* shadow on the floor */}
      <polygon points="1270,640 1403,567 1508,628 1363,713 1270,690" fill="#8f8f8f" opacity="0.85" filter="url(#soft)" />

      {/* green box, inside faces */}
      <polygon points="730,503 843,437 843,562 837,565" fill="#86b389" />
      <polygon points="730,503 837,565 730,627" fill="#7ba57e" />
      <polygon points="843,437 933,489 927,493 927,617 843,562" fill="#92cf93" />
      <polygon points="730,627 837,565 1360,866 1360,989" fill="#8ac48c" />
      <polygon points="1162,750 1275,687 1474,802 1360,866" fill="#8ac78c" />
      <polygon points="935,695 1035,660 1265,790 1150,830" fill="#6faa73" opacity="0.55" filter="url(#soft2)" />
      <polygon points="1170,745 1275,690 1345,727 1245,785" fill="#6faa73" opacity="0.5" filter="url(#soft2)" />
      <polygon points="1360,866 1474,802 1474,924 1360,989" fill="#668b6a" />
      <line x1="1360" y1="866" x2="1433" y2="905" stroke="#79a87d" strokeWidth="1" />
      <line x1="843" y1="561" x2="927" y2="608" stroke="#a6eaa4" strokeWidth="1" />
      <line x1="1167" y1="748" x2="1360" y2="861" stroke="#a6eaa4" strokeWidth="1" />

      {/* grey part */}
      <polygon points="1209,253 1276,215 1510,350 1444,389" fill="#d3d3d3" stroke="#8fa08f" strokeWidth="0.7" />
      <polygon points="1209,253 1444,389 1444,466 1209,331" fill="#b5b5b5" stroke="#8fa08f" strokeWidth="0.7" />
      <polygon points="1209,331 1444,466 1162,625 927,493" fill="#d6d6d6" stroke="#a0aaa0" strokeWidth="0.7" />
      <polygon points="1510,350 1511,505 1275,638 1275,687 1162,750 1162,625 1444,466 1444,389" fill="#5f5f5f" />
      <polygon points="1162,622 1275,687 1162,750" fill="#64796a" />
      <polygon points="927,493 1162,627 1162,752 927,617" fill="#b0c0ad" stroke="#8a968a" strokeWidth="0.6" />
      <line x1="933" y1="490" x2="1163" y2="622" stroke="#c3d4c3" strokeWidth="2" />

      {/* edges */}
      <g fill="none" stroke="#a6f3a2" strokeWidth="1.6">
        <polyline points="843,437 730,503 730,627 1360,989 1360,866 730,503" />
        <polyline points="1360,866 1474,802 1474,924 1360,989" />
        <line x1="843" y1="437" x2="933" y2="489" />
        <line x1="1162" y1="622" x2="1474" y2="802" />
        <line x1="843" y1="437" x2="843" y2="562" strokeWidth="1.2" />
        <line x1="730" y1="627" x2="837" y2="565" strokeWidth="1" />
      </g>

      {/* profile */}
      <path d="M1044 685V808L1152 747" fill="none" stroke="#f0b41e" strokeWidth="2" />
      <path d="M1152 747L1160 742V618L1044 685" fill="none" stroke="#e6cb6c" strokeWidth="2" opacity="0.7" />

      {/* dimension */}
      <g stroke="#222" strokeWidth="0.8" fill="none">
        <line x1="1158" y1="682" x2="1230" y2="641" opacity="0.4" />
        <line x1="1232" y1="645" x2="1362" y2="718" strokeDasharray="3 1" />
        <line x1="1398" y1="740" x2="1548" y2="822" strokeDasharray="3 1" />
        <line x1="1548" y1="822" x2="1475" y2="863" />
      </g>
      <polygon points="1222,645 1232,636 1237,646 1226,650" fill="#8c7d2a" />
      <polygon points="1542,823 1523,807 1519,818" fill="#f5f000" stroke="#a8a414" strokeWidth="0.5" />
      <text x="1377" y="739" fontSize="15" fill="#f5e800" fontFamily="Liberation Sans, sans-serif">
        47
      </text>

      {/* triad on the sketch plane */}
      <polygon points="990,685 1017,670 1044,654 1073,669 1070,702 1044,716" fill="#6a9a98" fillOpacity="0.3" />
      <g fill="none" strokeWidth="1">
        <polyline points="1073,637 1073,669 1098,685 1070,702" stroke="#9aa29a" opacity="0.7" />
        <line x1="1073" y1="637" x2="1044" y2="654" stroke="#9aa29a" opacity="0.7" />
        <polygon points="1017,637 1073,669 1073,733 1017,700" stroke="#35e835" />
        <polyline points="1017,670 1044,654" stroke="#f0402a" />
        <line x1="1017" y1="670" x2="1017" y2="733" stroke="#e8805a" />
        <line x1="1017" y1="733" x2="1044" y2="717" stroke="#e8805a" />
        <polyline points="1017,670 990,685 1044,716 1070,702" stroke="#2a50f0" />
      </g>
      <path d="M1044 685V655" stroke="#1c3ee0" strokeWidth="5" />
      <polygon points="1038,660 1044,645 1050,660" fill="#2a50f0" />
      <path d="M1044 685L1068 698" stroke="#e6301e" strokeWidth="5" />
      <polygon points="1064,690 1078,703 1060,702" fill="#f0502e" />
      <text x="1039" y="642" fontSize="13" fill="#2a3cf0" fontFamily="Liberation Sans, sans-serif">
        Z
      </text>
      <text x="1080" y="713" fontSize="13" fill="#e84a3a" fontFamily="Liberation Sans, sans-serif">
        X
      </text>

      {/* corner axes */}
      <path d="M416 953V922" stroke="#0a0af0" strokeWidth="5" />
      <polygon points="411,928 417,914 423,928" fill="#1414e8" />
      <path d="M416 953L441 938" stroke="#08d808" strokeWidth="5" />
      <polygon points="435,934 451,933 441,945" fill="#14c814" />
      <path d="M416 953L440 966" stroke="#f01010" strokeWidth="5" />
      <polygon points="436,960 451,973 433,971" fill="#f03030" />
      <text x="412" y="912" fontSize="15" fill="#1414e8" fontFamily="Liberation Sans, sans-serif">
        Z
      </text>
      <text x="453" y="936" fontSize="15" fill="#14d014" fontFamily="Liberation Sans, sans-serif">
        Y
      </text>
      <text x="453" y="983" fontSize="15" fill="#f01818" fontFamily="Liberation Sans, sans-serif">
        X
      </text>

      {/* accept / cancel */}
      <path d="M1803 250l4-4 5 5 12-11 3 3-15 15z" fill="#c7e6c7" />
      <path d="M1851 280l3-3 8 8 8-8 3 3-8 8 8 8-3 3-8-8-8 8-3-3 8-8z" fill="#f0b8b0" />
    </svg>
  );
}

export default function App() {
  return (
    <div className="w-[1920px] h-[1042px] overflow-hidden flex flex-col bg-[#e2e4e7] font-[Roboto,sans-serif]">
      <svg className="w-0 h-0 block shrink-0">
        <defs>
          <linearGradient id="cyl" x1="0" x2="1" y1="0" y2="0">
            <stop offset="0" stopColor="#0b6c90" />
            <stop offset="0.45" stopColor="#2cb8dc" />
            <stop offset="1" stopColor="#0b6c90" />
          </linearGradient>
          <linearGradient id="steel" x1="0" x2="0" y1="0" y2="1">
            <stop offset="0" stopColor="#d4d6d8" />
            <stop offset="0.5" stopColor="#7a7d80" />
            <stop offset="1" stopColor="#c4c6c8" />
          </linearGradient>
          <linearGradient id="bgrad" x1="0" x2="0" y1="0" y2="1">
            <stop offset="0" stopColor="#6a6d72" />
            <stop offset="0.5" stopColor="#8a98b0" />
            <stop offset="1" stopColor="#4a4d52" />
          </linearGradient>
        </defs>
      </svg>

      {/* title / menu */}
      <div className="h-[27px] flex items-center text-[12px] text-[#34383d] shrink-0">
        <div className="w-[20px] flex items-center justify-center">
          <Icon n="logo" size="w-[18px] h-[18px]" />
        </div>
        <div className="ml-[4px] mr-[7px] w-px h-[16px] bg-[#c2c5c9]" />
        {quick.map(([n, w]) => (
          <div key={n} className={`${w} flex items-center justify-center`}>
            <Icon n={n} size="w-[18px] h-[18px]" />
          </div>
        ))}
        <Slot n="^" w="w-[10px]" />
        <div className="w-[20px] flex flex-col items-center gap-px">
          <div className="w-[7px] h-px bg-[#222]" />
          <Caret color="#222" />
        </div>
        <svg viewBox="0 0 7 12" className="w-[7px] h-[12px] ml-[2px] mr-[13px]">
          <path d="M7 0v12L0 6z" fill="#1d8fd8" />
        </svg>
        {menus.map(([m, w]) => (
          <span key={m} className={w}>
            {m}
          </span>
        ))}
        <span className="ml-[340px] w-[106px] mt-[4px] text-[#4a4f55]">ZW3D 2019&nbsp; x64</span>
        <span className="mt-[4px] text-[#4a4f55]">Part - [zw3d vs creo lesson two sketch.Z3 - [Part001]]</span>
        <div className="flex-1" />
        <div className="flex items-center gap-[10px] pr-[9px] text-[#9a9da1]">
          <div className="w-[8px] h-[3px] border border-[#a6a9ad]" />
          <div className="w-[11px] h-[11px] border border-[#a6a9ad]" />
          <svg viewBox="0 0 12 12" className="w-[12px] h-[12px]">
            <path d="M1 1l10 10M11 1L1 11" stroke="#a6a9ad" strokeWidth="1.6" />
          </svg>
        </div>
      </div>

      {/* ribbon tabs */}
      <div className="h-[21px] flex items-end pl-[2px] text-[12px] text-[#4a4f55] shrink-0">
        <div className="w-[55px] h-[20px] bg-[#2f60bd] text-white flex items-center justify-center">File</div>
        <div className="ml-[5px] w-[51px] h-[21px] bg-white border-x border-t border-[#c3c9d1] flex items-center justify-center text-[#5a6066]">
          Shape
        </div>
        <div className="w-[13px]" />
        {tabs.map(([t, w]) => (
          <div key={t} className={`${w} h-[20px] leading-[20px] shrink-0`}>
            {t}
          </div>
        ))}
        <div className="flex-1" />
        <div className="flex items-center h-[20px] pr-[6px]">
          <svg viewBox="0 0 12 10" className="w-[11px] h-[9px]">
            <path d="M1 6l5-5 5 5-2 3H3z" fill="none" stroke="#3a3e42" />
          </svg>
          <svg viewBox="0 0 16 16" className="w-[16px] h-[16px] ml-[25px]">
            <circle cx="8" cy="8" r="5" fill="none" stroke="#a4a7ab" strokeWidth="3" strokeDasharray="2.4 1.2" />
          </svg>
          <svg viewBox="0 0 16 16" className="w-[17px] h-[17px] ml-[18px]">
            <circle cx="8" cy="8" r="7.5" fill="#1f5fc4" stroke="#9cb4d8" />
            <path d="M5.5 6a2.5 2.5 0 1 1 3.5 2.3V10" fill="none" stroke="#fff" strokeWidth="1.5" />
            <rect x="8" y="11" width="1.6" height="1.6" fill="#fff" />
          </svg>
          <div className="ml-[8px]">
            <Caret />
          </div>
          <div className="ml-[8px] w-[7px] h-[2px] mt-[6px] bg-black" />
          <div className="ml-[8px] w-[9px] h-[9px] border-2 border-black" />
          <svg viewBox="0 0 10 10" className="w-[9px] h-[9px] ml-[9px]">
            <path d="M1 1l8 8M9 1L1 9" stroke="#000" strokeWidth="2" />
          </svg>
        </div>
      </div>

      <RibbonBar />
      <Toolbar />

      {/* main */}
      <div className="h-[841px] flex shrink-0">
        <div className="w-[361px] shrink-0 flex flex-col">
          <div className="h-[23px] flex items-center pl-[6px] pr-[9px] text-[12px] text-[#3a3f45] shrink-0">
            <span className="flex-1">Extrude</span>
            <div className="w-[9px] h-[8px] border border-[#8d9095] mr-[8px]" />
            <svg viewBox="0 0 12 12" className="w-[11px] h-[11px]">
              <path d="M1 1l10 10M11 1L1 11" stroke="#8d9095" strokeWidth="1.6" />
            </svg>
          </div>
          <ToolPanel />
        </div>
        <div className="flex-1 min-w-0 flex flex-col">
          <div className="h-[24px] flex items-end text-[11.7px] text-[#3a3f45] shrink-0 border-b border-[#c8ccd2]">
            <div className="w-[266px] h-[21px] bg-[#d9dde1] flex items-center pl-[32px] gap-[8px] border-r border-[#c3c9d1]">
              <span className="whitespace-nowrap">zw3d vs creo lesson two.Z3 - [Part001]</span>
              <svg viewBox="0 0 10 10" className="w-[9px] h-[9px] ml-[3px]">
                <path d="M1 1l8 8M9 1L1 9" stroke="#6a5a28" strokeWidth="1.3" />
              </svg>
            </div>
            <div className="w-[293px] h-[24px] -mb-px bg-white border-x border-t border-[#c3c9d1] flex items-center pl-[13px]">
              <svg viewBox="0 0 10 10" className="w-[9px] h-[9px] mr-[8px]">
                <path d="M5 0v10M0 5h10" stroke="#6a5a28" strokeWidth="1.4" />
              </svg>
              <span className="whitespace-nowrap">zw3d vs creo lesson two sketch.Z3 - [Part001]</span>
              <svg viewBox="0 0 10 10" className="w-[9px] h-[9px] ml-[9px]">
                <path d="M1 1l8 8M9 1L1 9" stroke="#6a5a28" strokeWidth="1.3" />
              </svg>
            </div>
            <svg viewBox="0 0 10 10" className="w-[10px] h-[10px] ml-[12px] mb-[6px]">
              <path d="M5 0v10M0 5h10" stroke="#7a7e82" strokeWidth="1.2" />
            </svg>
            <div className="flex-1" />
            <div className="mr-[8px] mb-[6px] flex flex-col items-center gap-[2px]">
              <div className="w-[9px] h-px bg-[#7a7e82]" />
              <Caret color="#9a9da1" />
            </div>
          </div>
          <div className="relative flex-1 min-h-0 bg-[linear-gradient(#ffffff_0%,#999999_100%)] border-l border-[#c8ccd2]">
            <Scene />
            <div className="absolute left-[13px] top-[26px] text-[13px] leading-[16px] text-[#111] font-[Liberation_Sans,sans-serif]">
              <div>&lt;right-click&gt; for numeric input options.</div>
              <div>&lt;Shift-right-click&gt; to display pick filter.</div>
            </div>
            <div className="absolute left-[488px] top-[5px] h-[22px] flex items-center">
              {viewBar.map(([n, w], i) => (
                <Slot key={i} n={n} w={w} s="w-[19px] h-[19px]" />
              ))}
              <div className="ml-[4px] w-[121px] h-[22px] bg-[#e6e8ea] flex items-center pl-[6px] gap-[3px] text-[12px] text-[#7e8286]">
                <svg viewBox="0 0 12 16" className="w-[11px] h-[15px] shrink-0">
                  <path d="M6 1a5 5 0 0 0-3 9v3h6v-3a5 5 0 0 0-3-9z" fill="#fff" stroke="#a4a7ab" />
                </svg>
                <div className="w-[13px] h-[13px] rounded-full bg-[#dcdee0] border border-[#9a9da1] shrink-0" />
                <span className="ml-px flex-1">Layer0000</span>
                <div className="mr-[8px]">
                  <Caret color="#b8babd" />
                </div>
              </div>
            </div>
            <div className="absolute left-[3px] bottom-[2px] text-[15px] leading-[18px] text-[#1c1c1c] font-[Liberation_Sans,sans-serif]">
              85.9462 mm
            </div>
          </div>
        </div>
      </div>

      {/* status */}
      <div className="h-[30px] border-t border-[#c8ccd2] flex items-center text-[12px] text-[#34383d] shrink-0">
        <span className="pl-[6px] w-[1474px] whitespace-pre">Specify end.  &lt;middle-click&gt; for default. (77.5)</span>
        <div className="w-px h-[26px] bg-[#8d9095]" />
        <div className="ml-[7px] w-[23px] h-[22px] bg-[#fdd97d] border border-[#d9a93a] flex items-center justify-center">
          <Icon n="tools" size="w-[15px] h-[15px]" />
        </div>
        <div className="ml-[5px] w-[26px] flex justify-center">
          <Icon n="monitor" size="w-[17px] h-[17px]" />
        </div>
        <div className="ml-[4px] w-[22px] flex justify-center">
          <Icon n="list" size="w-[16px] h-[16px]" />
        </div>
        <div className="ml-[8px] flex-1 h-[22px] bg-white border border-[#c3c9d1]" />
      </div>
      <div className="h-[2px] flex shrink-0">
        <div className="w-[392px] bg-[#e2e4e7]" />
        <div className="w-[195px] bg-[#26282c]" />
        <div className="w-[47px] bg-[#b5652a]" />
        <div className="flex-1 bg-[#26282c]" />
      </div>
    </div>
  );
}
